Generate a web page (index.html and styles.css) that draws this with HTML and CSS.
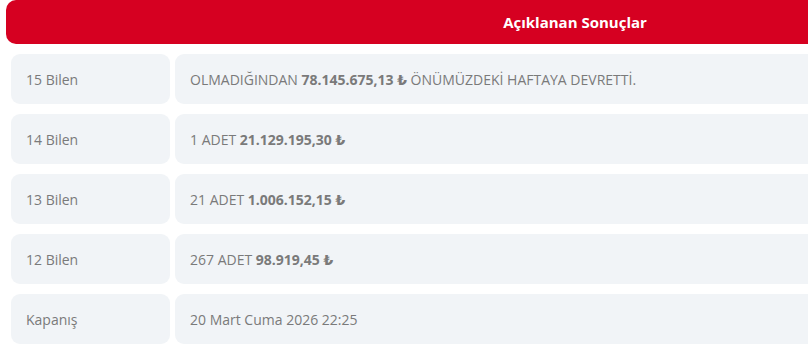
FILE: index.html
```html
<!DOCTYPE html>
<html lang="tr">
<head>
<meta charset="utf-8">
<link rel="stylesheet" href="styles.css">
</head>
<body>
<div class="results">
  <div class="header">Açıklanan Sonuçlar</div>
  <div class="grid">
    <div class="cell label">15 Bilen</div>
    <div class="cell value">OLMADIĞINDAN <b>78.145.675,13 ₺</b> ÖNÜMÜZDEKİ HAFTAYA DEVRETTİ.</div>
    <div class="cell label">14 Bilen</div>
    <div class="cell value">1 ADET <b>21.129.195,30 ₺</b></div>
    <div class="cell label">13 Bilen</div>
    <div class="cell value">21 ADET <b>1.006.152,15 ₺</b></div>
    <div class="cell label">12 Bilen</div>
    <div class="cell value">267 ADET <b>98.919,45 ₺</b></div>
    <div class="cell label">Kapanış</div>
    <div class="cell value">20 Mart Cuma 2026 22:25</div>
  </div>
</div>
</body>
</html>
```
FILE: styles.css
```css
html, body {
  margin: 0;
  padding: 0;
  background: #ffffff;
  overflow: hidden;
}
body {
  font-family: "Open Sans", "DejaVu Sans", sans-serif;
  font-size: 14px;
  color: #7a7a7a;
}
.results {
  width: 1138px;
  margin-left: 6px;
}
.header {
  height: 44px;
  background: #d60021;
  color: #ffffff;
  font-weight: 700;
  font-size: 15px;
  display: flex;
  align-items: center;
  justify-content: center;
  border-radius: 10px;
}
.grid {
  display: grid;
  grid-template-columns: 159px 1fr;
  gap: 10px 5px;
  padding: 10px 0 0 5px;
}
.cell {
  height: 50px;
  background: #f1f4f7;
  border-radius: 9px;
  display: flex;
  align-items: center;
  padding: 0 15px;
  white-space: pre;
}
.cell b {
  font-weight: 700;
}
```
